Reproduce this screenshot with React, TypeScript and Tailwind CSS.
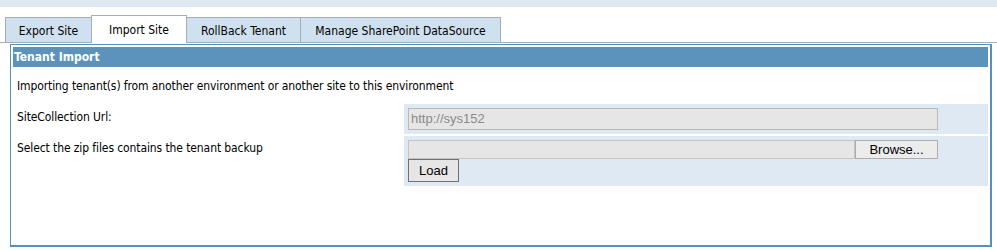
import React from "react";

const tabs = [
  { label: "Export Site", w: "w-[87px]", active: false },
  { label: "Import Site", w: "w-[96px]", active: true },
  { label: "RollBack Tenant", w: "w-[115px]", active: false },
  { label: "Manage SharePoint DataSource", w: "w-[201px]", active: false },
];

function App() {
  return (
    <div className="w-[997px] h-[251px] bg-white overflow-hidden font-['DejaVu_Sans_Condensed','Liberation_Sans',sans-serif] text-[12px] text-black">
      <div className="h-[7px] bg-[#dde8f2]" />
      {/* tabs */}
      <div className="mt-[8px] h-[28px] flex items-end pl-[5px] border-b border-[#a3aebb]">
        {tabs.map((t, i) => (
          <div
            key={i}
            className={
              t.active
                ? `${t.w} h-[28px] -mb-px -ml-px bg-white border border-b-0 border-[#a3aebb] flex items-center justify-center relative`
                : `${t.w} h-[25px] ${i === 0 ? "" : "-ml-px"} bg-[#cfe0ee] border border-b-0 border-[#a3aebb] flex items-center justify-center pt-px`
            }
          >
            {t.label}
          </div>
        ))}
      </div>

      {/* panel */}
      <div className="mt-px ml-[10px] w-[982px] h-[203px] border-l border-t border-r-2 border-b-2 border-[#5b8fbb] p-[2px] flex flex-col gap-[2px]">
        <div className="h-[20px] bg-[#5b93bd] text-white font-bold pl-[1px] flex items-center">
          Tenant Import
        </div>
        <div className="h-[33px] flex items-center pl-[4px] pt-px tracking-[-0.1px]">
          Importing tenant(s) from another environment or another site to this environment
        </div>
        <div className="flex gap-0">
          <div className="w-[391px] pl-[4px] pt-[4px] tracking-[-0.1px]">SiteCollection Url:</div>
          <div className="flex-1 bg-[#dee9f3] p-[4px] h-[30px]">
            <div className="w-[530px] h-[22px] bg-[#e6e6e6] border border-[#b8b8b8] flex items-center pl-[2px] font-['Liberation_Sans',Arial,sans-serif] text-[13px] text-[#8a8a8a]">
              http://sys152
            </div>
          </div>
        </div>
        <div className="flex gap-0">
          <div className="w-[391px] pl-[4px] pt-[3px] tracking-[-0.1px]">Select the zip files contains the tenant backup</div>
          <div className="flex-1 bg-[#dee9f3] h-[50px] pl-[4px] pt-[4px] font-['Liberation_Sans',Arial,sans-serif] text-[13px]">
            <div className="flex w-[530px] h-[19px]">
              <div className="flex-1 bg-[#e6e6e6] border border-[#c4c4c4]" />
              <div className="w-[83px] bg-[#ececec] border border-[#adadad] flex items-center justify-center">
                Browse...
              </div>
            </div>
            <div className="w-[51px] h-[23px] bg-[#e6e6e6] border border-[#707070] flex items-center justify-center">
              Load
            </div>
          </div>
        </div>
      </div>
    </div>
  );
}

export default App;
